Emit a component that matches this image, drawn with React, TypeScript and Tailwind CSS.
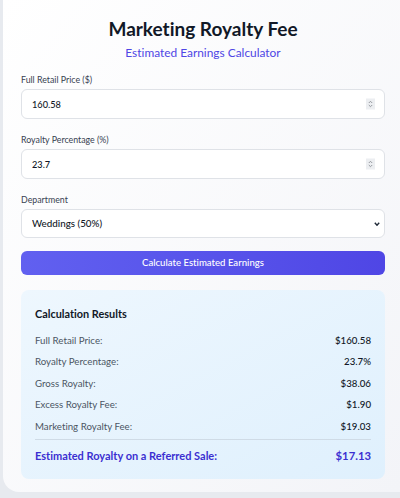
import { useState } from "react";

const rows = [
  { label: "Full Retail Price:", value: "$160.58" },
  { label: "Royalty Percentage:", value: "23.7%" },
  { label: "Gross Royalty:", value: "$38.06" },
  { label: "Excess Royalty Fee:", value: "$1.90" },
  { label: "Marketing Royalty Fee:", value: "$19.03" },
];

function Spinner() {
  return (
    <div className="absolute right-[10px] top-1/2 -translate-y-1/2 w-[9px] h-[11px] bg-[#eceef1] flex items-center justify-center">
      <svg width="5" height="9" viewBox="0 0 5 9" fill="none" stroke="#8b8f96" strokeWidth="0.9">
        <path d="M0.8 3.5 L2.5 1.8 L4.2 3.5" />
        <path d="M0.8 5.5 L2.5 7.2 L4.2 5.5" />
      </svg>
    </div>
  );
}

function NumberField({ label, value }: { label: string; value: string }) {
  const [val, setVal] = useState(value);
  return (
    <div className="flex flex-col">
      <label className="text-[8.8px] leading-[16px] text-[#374151]">{label}</label>
      <div className="relative mt-[1px]">
        <input
          type="text"
          value={val}
          onChange={(e) => setVal(e.target.value)}
          className="w-full h-[30px] pl-[10px] pr-8 bg-white border border-[#dfe2e7] rounded-md text-[9.2px] font-medium text-[#111827] outline-none"
        />
        <Spinner />
      </div>
    </div>
  );
}

export default function App() {
  return (
    <div
      className="h-[498px] overflow-hidden bg-[#e7eaef] pl-[3px] [font-variant-ligatures:none]"
      style={{ fontFamily: 'Lato, "Noto Sans", sans-serif' }}
    >
      <div className="h-[492px] rounded-bl-2xl bg-gradient-to-br from-white to-[#f3f4f8] pl-[18px] pr-[15px] pt-[15px] pb-[13px] flex flex-col">
        <h1 className="text-center text-[19px] leading-[28px] font-bold text-[#111827]">
          Marketing Royalty Fee
        </h1>
        <p className="text-center text-[11.9px] leading-[18px] mt-[1px] text-[#4f46e5]">
          Estimated Earnings Calculator
        </p>

        <div className="mt-[10px] flex flex-col gap-[13px]">
          <NumberField label="Full Retail Price ($)" value="160.58" />
          <NumberField label="Royalty Percentage (%)" value="23.7" />
          <div className="flex flex-col">
            <label className="text-[8.8px] leading-[16px] text-[#374151]">Department</label>
            <div className="relative mt-[1px]">
              <select
                defaultValue="weddings"
                className="appearance-none w-full h-[29px] pl-[10px] bg-white border border-[#dfe2e7] rounded-md text-[9.8px] font-medium text-[#111827] outline-none"
              >
                <option value="weddings">Weddings (50%)</option>
                <option value="events">Events (40%)</option>
                <option value="portraits">Portraits (30%)</option>
              </select>
              <svg
                className="absolute right-[5px] top-1/2 -translate-y-1/2 pointer-events-none"
                width="6"
                height="5"
                viewBox="0 0 6 5"
                fill="none"
                stroke="#1f2937"
                strokeWidth="1.4"
              >
                <path d="M0.8 1.2 L3 3.6 L5.2 1.2" />
              </svg>
            </div>
          </div>
        </div>

        <button
          type="button"
          className="mt-[13px] h-[29px] w-full rounded-md bg-gradient-to-r from-[#6160f0] to-[#4f46e5] text-white text-[9.6px] font-medium"
        >
          Calculate Estimated Earnings
        </button>

        <div className="mt-[15px] rounded-lg bg-gradient-to-br from-[#eef7fe] to-[#dff0fd] px-[14px] pt-[14px] pb-[14px]">
          <h2 className="text-[10.9px] leading-[20px] font-bold text-[#111827]">Calculation Results</h2>
          <div className="mt-[6px] flex flex-col">
            {rows.map((r) => (
              <div key={r.label} className="flex justify-between items-center h-[21.5px] text-[9.7px]">
                <span className="text-[#4b5563]">{r.label}</span>
                <span className="text-[#111827] font-medium">{r.value}</span>
              </div>
            ))}
          </div>
          <div className="mt-[2px] border-t border-[#cfdbe6]" />
          <div className="mt-[7px] flex justify-between items-center h-[18px] font-bold text-[#3b2fd1]">
            <span className="text-[11px]">Estimated Royalty on a Referred Sale:</span>
            <span className="text-[11.3px]">$17.13</span>
          </div>
        </div>
      </div>
    </div>
  );
}
